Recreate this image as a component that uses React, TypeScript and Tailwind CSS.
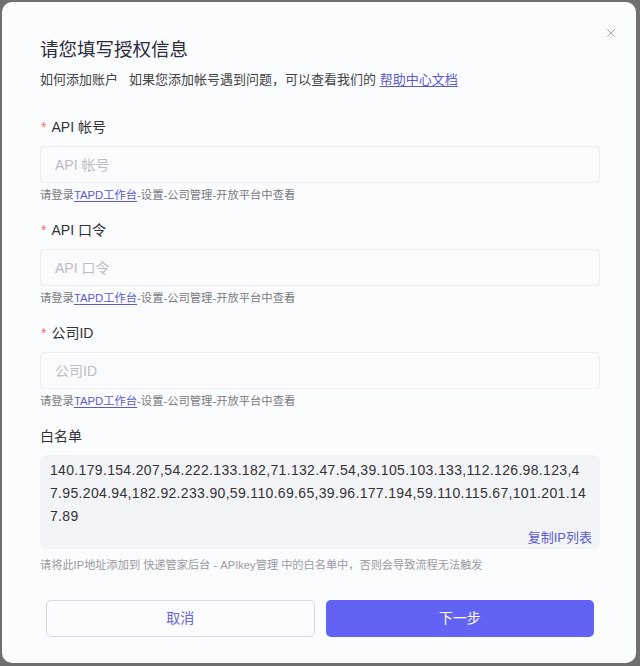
import { X } from 'lucide-react';

const ipList =
  '140.179.154.207,54.222.133.182,71.132.47.54,39.105.103.133,112.126.98.123,47.95.204.94,182.92.233.90,59.110.69.65,39.96.177.194,59.110.115.67,101.201.147.89';

const fields = [
  { label: 'API 帐号', placeholder: 'API 帐号' },
  { label: 'API 口令', placeholder: 'API 口令' },
  { label: '公司ID', placeholder: '公司ID' },
];

function Field({ label, placeholder }: { label: string; placeholder: string }) {
  return (
    <div className="flex flex-col">
      <div className="flex h-5 items-center text-[14px] text-[#333]">
        <span className="mr-[5px] ml-px text-[#f36b6b]">*</span>
        {label}
      </div>
      <input
        placeholder={placeholder}
        className="mt-[9px] h-[37px] w-full rounded-[4px] border border-[#ececf3] bg-[#fbfbfd] px-[14px] text-[14px] text-[#333] outline-none placeholder:text-[#bcbcc4]"
      />
      <p className="mt-1 h-4 text-[11.3px] leading-4 text-[#7a7a80]">
        请登录<a className="text-[#5b5bcf] underline underline-offset-2">TAPD工作台</a>-设置-公司管理-开放平台中查看
      </p>
    </div>
  );
}

export default function App() {
  return (
    <div className="h-[666px] w-[640px] bg-[#6f6f72] p-[2px] pr-1 pb-[3px] font-['Liberation_Sans','Noto_Sans_CJK_SC',sans-serif]">
      <div className="relative flex h-full flex-col rounded-[10px] bg-[#fbfcfe] pt-[34px] pr-9 pl-[38px]">
        <button className="absolute top-[24px] right-[18px] text-[#8a8a90]">
          <X size={14} strokeWidth={1.3} />
        </button>

        <h2 className="h-7 text-[18.5px] leading-7 text-[#2b2b3a]">请您填写授权信息</h2>
        <p className="mt-1.5 h-5 text-[13px] leading-5 text-[#444]">
          <span className="mr-[11px]">如何添加账户</span>
          如果您添加帐号遇到问题，可以查看我们的{' '}
          <a className="text-[#5b5bcf] underline underline-offset-2">帮助中心文档</a>
        </p>

        <div className="mt-[27px] flex flex-col gap-[17px]">
          {fields.map((f) => (
            <Field key={f.label} {...f} />
          ))}

          <div className="flex flex-col">
            <div className="h-5 text-[14px] leading-5 text-[#333]">白名单</div>
            <div className="mt-[9px] flex h-[94px] flex-col rounded-[6px] bg-[#f3f4f8] pt-1 pr-[11px] pb-[2px] pl-[10px]">
              <p className="text-[14px] leading-[23px] tracking-[0.33px] break-all text-[#333]">{ipList}</p>
              <div className="mt-auto -mr-[3px] flex h-[18px] justify-end">
                <a className="text-[13px] leading-[18px] text-[#5b5bcf]">复制IP列表</a>
              </div>
            </div>
            <p className="mt-2 h-4 text-[11.2px] leading-4 text-[#9a9aa2]">
              请将此IP地址添加到 快递管家后台 - APIkey管理 中的白名单中，否则会导致流程无法触发
            </p>
          </div>
        </div>

        <div className="mt-[27px] mr-[6px] ml-[6px] grid grid-cols-2 gap-[11px]">
          <button className="h-[37px] rounded-[5px] border border-[#d9d9e6] bg-[#fbfcfe] text-[14px] text-[#6666d4]">
            取消
          </button>
          <button className="h-[37px] rounded-[5px] bg-[#6262f4] text-[14px] text-white">下一步</button>
        </div>
      </div>
    </div>
  );
}
